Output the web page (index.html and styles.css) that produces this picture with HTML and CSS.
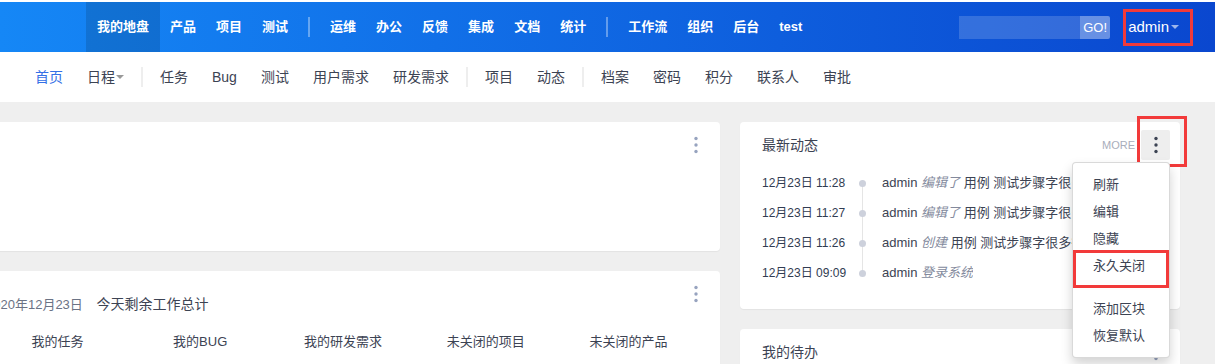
FILE: index.html
```html
<!DOCTYPE html>
<html lang="zh-CN">
<head>
  <meta charset="UTF-8" />
  <title>我的地盘 - 禅道</title>
  <link rel="stylesheet" href="styles.css">
</head>
<body>

  <header class="topbar">
    <nav class="mainnav">
      <a class="active">我的地盘</a>
      <a>产品</a>
      <a>项目</a>
      <a>测试</a>
      <span class="sep"></span>
      <a>运维</a>
      <a>办公</a>
      <a>反馈</a>
      <a>集成</a>
      <a>文档</a>
      <a>统计</a>
      <span class="sep"></span>
      <a>工作流</a>
      <a>组织</a>
      <a>后台</a>
      <a>test</a>
    </nav>
    <div class="tools">
      <div class="search">
        <input type="text" />
        <button>GO!</button>
      </div>
      <a class="user">admin<span class="caret"></span></a>
    </div>
  </header>

  <nav class="subnav">
    <a class="active">首页</a>
    <a>日程<span class="caret"></span></a>
    <span class="sep"></span>
    <a>任务</a>
    <a>Bug</a>
    <a>测试</a>
    <a>用户需求</a>
    <a>研发需求</a>
    <span class="sep"></span>
    <a>项目</a>
    <a>动态</a>
    <span class="sep"></span>
    <a>档案</a>
    <a>密码</a>
    <a>积分</a>
    <a>联系人</a>
    <a>审批</a>
  </nav>

  <main class="dashboard">
    <div class="col col-left">
      <div class="panel panel-blank">
        <div class="panel-actions">
          <button class="dots"><svg width="4" height="18" viewBox="0 0 4 18"><circle cx="2" cy="2.5" r="1.7"/><circle cx="2" cy="9" r="1.7"/><circle cx="2" cy="15.5" r="1.7"/></svg></button>
        </div>
      </div>
      <div class="panel panel-summary">
        <div class="panel-actions">
          <button class="dots"><svg width="4" height="18" viewBox="0 0 4 18"><circle cx="2" cy="2.5" r="1.7"/><circle cx="2" cy="9" r="1.7"/><circle cx="2" cy="15.5" r="1.7"/></svg></button>
        </div>
        <div class="summary-head">
          <span class="date">2020年12月23日</span>
          <span class="summary-title">今天剩余工作总计</span>
        </div>
        <div class="summary-grid">
          <div>我的任务</div>
          <div>我的BUG</div>
          <div>我的研发需求</div>
          <div>未关闭的项目</div>
          <div>未关闭的产品</div>
        </div>
      </div>
    </div>

    <div class="col col-right">
      <div class="panel">
        <div class="panel-head">最新动态</div>
        <div class="panel-actions">
          <a class="more">MORE</a>
          <button class="dots open"><svg width="4" height="18" viewBox="0 0 4 18"><circle cx="2" cy="2.5" r="1.7"/><circle cx="2" cy="9" r="1.7"/><circle cx="2" cy="15.5" r="1.7"/></svg></button>
        </div>
        <ul class="timeline">
          <li><span class="time">12月23日 11:28</span><span class="dot"></span><span class="text">admin <em>编辑了</em> 用例 <a>测试步骤字很多很多的用例</a></span></li>
          <li><span class="time">12月23日 11:27</span><span class="dot"></span><span class="text">admin <em>编辑了</em> 用例 <a>测试步骤字很多很多的用例</a></span></li>
          <li><span class="time">12月23日 11:26</span><span class="dot"></span><span class="text">admin <em>创建</em> 用例 <a>测试步骤字很多很多的用例</a></span></li>
          <li><span class="time">12月23日 09:09</span><span class="dot"></span><span class="text">admin <em>登录系统</em></span></li>
        </ul>
        <ul class="dropdown">
          <li><a>刷新</a></li>
          <li><a>编辑</a></li>
          <li><a>隐藏</a></li>
          <li class="marked"><a>永久关闭</a></li>
          <li class="divider"></li>
          <li><a>添加区块</a></li>
          <li><a>恢复默认</a></li>
        </ul>
      </div>
      <div class="panel panel-todo">
        <div class="panel-head">我的待办</div>
        <div class="panel-actions">
          <button class="dots"><svg width="4" height="18" viewBox="0 0 4 18"><circle cx="2" cy="2.5" r="1.7"/><circle cx="2" cy="9" r="1.7"/><circle cx="2" cy="15.5" r="1.7"/></svg></button>
        </div>
      </div>
    </div>
  </main>

</body>
</html>
```

FILE: styles.css
```css
body {
  margin: 0;
  background: #efefef;
  color: #3c4353;
  font-family: "Liberation Sans", "Noto Sans CJK SC", sans-serif;
  font-size: 13px;
  line-height: 20px;
  overflow: hidden;
}
a {
  color: inherit;
  text-decoration: none;
}

/* top bar */
.topbar {
  display: flex;
  justify-content: space-between;
  align-items: center;
  height: 50px;
  border-top: 2px solid #fff;
  padding-left: 86px;
  background: linear-gradient(90deg, #1587f6, #0a47cf);
}
.mainnav {
  display: flex;
  align-items: center;
  height: 100%;
}
.mainnav a {
  padding: 0 10px;
  line-height: 50px;
  color: #fff;
  font-weight: bold;
}
.mainnav a.active {
  padding: 0 11px;
  background: rgba(0, 0, 0, 0.13);
}
.mainnav .sep {
  width: 2px;
  height: 20px;
  margin: 0 10px;
  background: rgba(255, 255, 255, 0.35);
}
.tools {
  display: flex;
  align-items: center;
  margin-right: 22px;
}
.search {
  display: flex;
  margin-right: 13px;
}
.search input {
  width: 121px;
  height: 23px;
  box-sizing: border-box;
  border: 0;
  padding: 0 6px;
  background: rgba(255, 255, 255, 0.17);
  outline: none;
  color: #fff;
}
.search button {
  width: 30px;
  height: 23px;
  padding: 0;
  border: 0;
  border-radius: 0 2px 2px 0;
  background: rgba(255, 255, 255, 0.38);
  color: #fff;
  font-family: "Liberation Sans", sans-serif;
  font-size: 13px;
}
.user {
  display: flex;
  align-items: center;
  height: 37px;
  box-sizing: border-box;
  padding: 0 11px 0 2px;
  border: 3px solid #f23a3a;
  color: #fff;
  font-size: 15px;
}
.user .caret {
  margin-left: 2px;
  border-top: 4px solid rgba(255, 255, 255, 0.6);
  border-left: 4px solid transparent;
  border-right: 4px solid transparent;
}

/* sub nav */
.subnav {
  display: flex;
  align-items: center;
  height: 50px;
  padding-left: 23px;
  background: #fff;
  font-size: 14px;
}
.subnav a {
  display: flex;
  align-items: center;
  padding: 0 12px;
}
.subnav a.active {
  color: #3470e6;
}
.subnav .caret {
  margin-left: 1px;
  border-top: 4px solid #999;
  border-left: 4px solid transparent;
  border-right: 4px solid transparent;
}
.subnav .sep {
  width: 2px;
  height: 20px;
  margin: 0 5px;
  background: #eee;
}

/* dashboard */
.dashboard {
  display: flex;
  align-items: flex-start;
  gap: 20px;
  padding-top: 20px;
  margin-left: -34px;
}
.col {
  display: flex;
  flex-direction: column;
  gap: 20px;
  flex: none;
}
.col-left {
  width: 754px;
}
.col-right {
  width: 440px;
}
.panel {
  position: relative;
  background: #fff;
  border-radius: 4px;
  box-shadow: 0 1px 1px rgba(0, 0, 0, 0.05);
}
.panel-blank {
  height: 129px;
}
.panel-head {
  height: 46px;
  line-height: 46px;
  padding-left: 22px;
  font-size: 14px;
}
.panel-actions {
  position: absolute;
  top: 8px;
  right: 10px;
  display: flex;
  align-items: center;
}
.more {
  margin-right: 6px;
  font-size: 11px;
  color: #a9aebb;
}
.dots {
  position: relative;
  display: flex;
  align-items: center;
  justify-content: center;
  width: 29px;
  height: 30px;
  padding: 0;
  border: 0;
  border-radius: 2px;
  background: transparent;
  fill: #97a3bf;
}
.dots.open {
  background: #eee;
  fill: #3c4353;
}
.dots.open::after {
  content: "";
  position: absolute;
  top: -14px;
  left: -4px;
  right: -17px;
  bottom: -7px;
  border: 3px solid #f23a3a;
}

/* summary */
.panel-summary {
  height: 120px;
  box-sizing: border-box;
  padding: 23px 20px 0;
}
.summary-head .date {
  margin-right: 10px;
  color: #6b7385;
}
.summary-head .summary-title {
  font-size: 14px;
}
.summary-grid {
  display: grid;
  grid-template-columns: repeat(5, 1fr);
  margin-top: 17px;
  text-align: center;
}

/* timeline */
.timeline {
  position: relative;
  list-style: none;
  margin: 0;
  padding: 0 22px 21px;
}
.timeline::before {
  content: "";
  position: absolute;
  left: 122px;
  top: 15px;
  bottom: 36px;
  width: 1px;
  background: #e5e5e5;
}
.timeline li {
  display: flex;
  align-items: center;
  height: 30px;
  white-space: nowrap;
  overflow: hidden;
}
.timeline .time {
  flex: none;
  width: 97px;
  font-size: 12px;
  color: #313c52;
}
.timeline .dot {
  position: relative;
  flex: none;
  width: 7px;
  height: 7px;
  margin-right: 16px;
  border-radius: 50%;
  background: #cdd1dc;
}
.timeline .text {
  overflow: hidden;
}
.timeline em {
  color: #838a9d;
}

/* dropdown */
.dropdown {
  position: absolute;
  top: 40px;
  right: 10px;
  z-index: 10;
  width: 98px;
  box-sizing: border-box;
  margin: 0;
  padding: 8px 0;
  list-style: none;
  background: #fff;
  border: 1px solid rgba(0, 0, 0, 0.15);
  border-radius: 4px;
  box-shadow: 0 6px 12px rgba(0, 0, 0, 0.175);
}
.dropdown a {
  display: block;
  padding: 0 20px;
  line-height: 27px;
}
.dropdown .divider {
  height: 1px;
  margin: 7px 0 8px;
  background: #e5e5e5;
}
.dropdown .marked {
  position: relative;
}
.dropdown .marked::after {
  content: "";
  position: absolute;
  top: -2px;
  left: 0;
  right: 0;
  height: 38px;
  box-sizing: border-box;
  border: 3px solid #f23a3a;
}

.panel-todo {
  height: 80px;
}
```
